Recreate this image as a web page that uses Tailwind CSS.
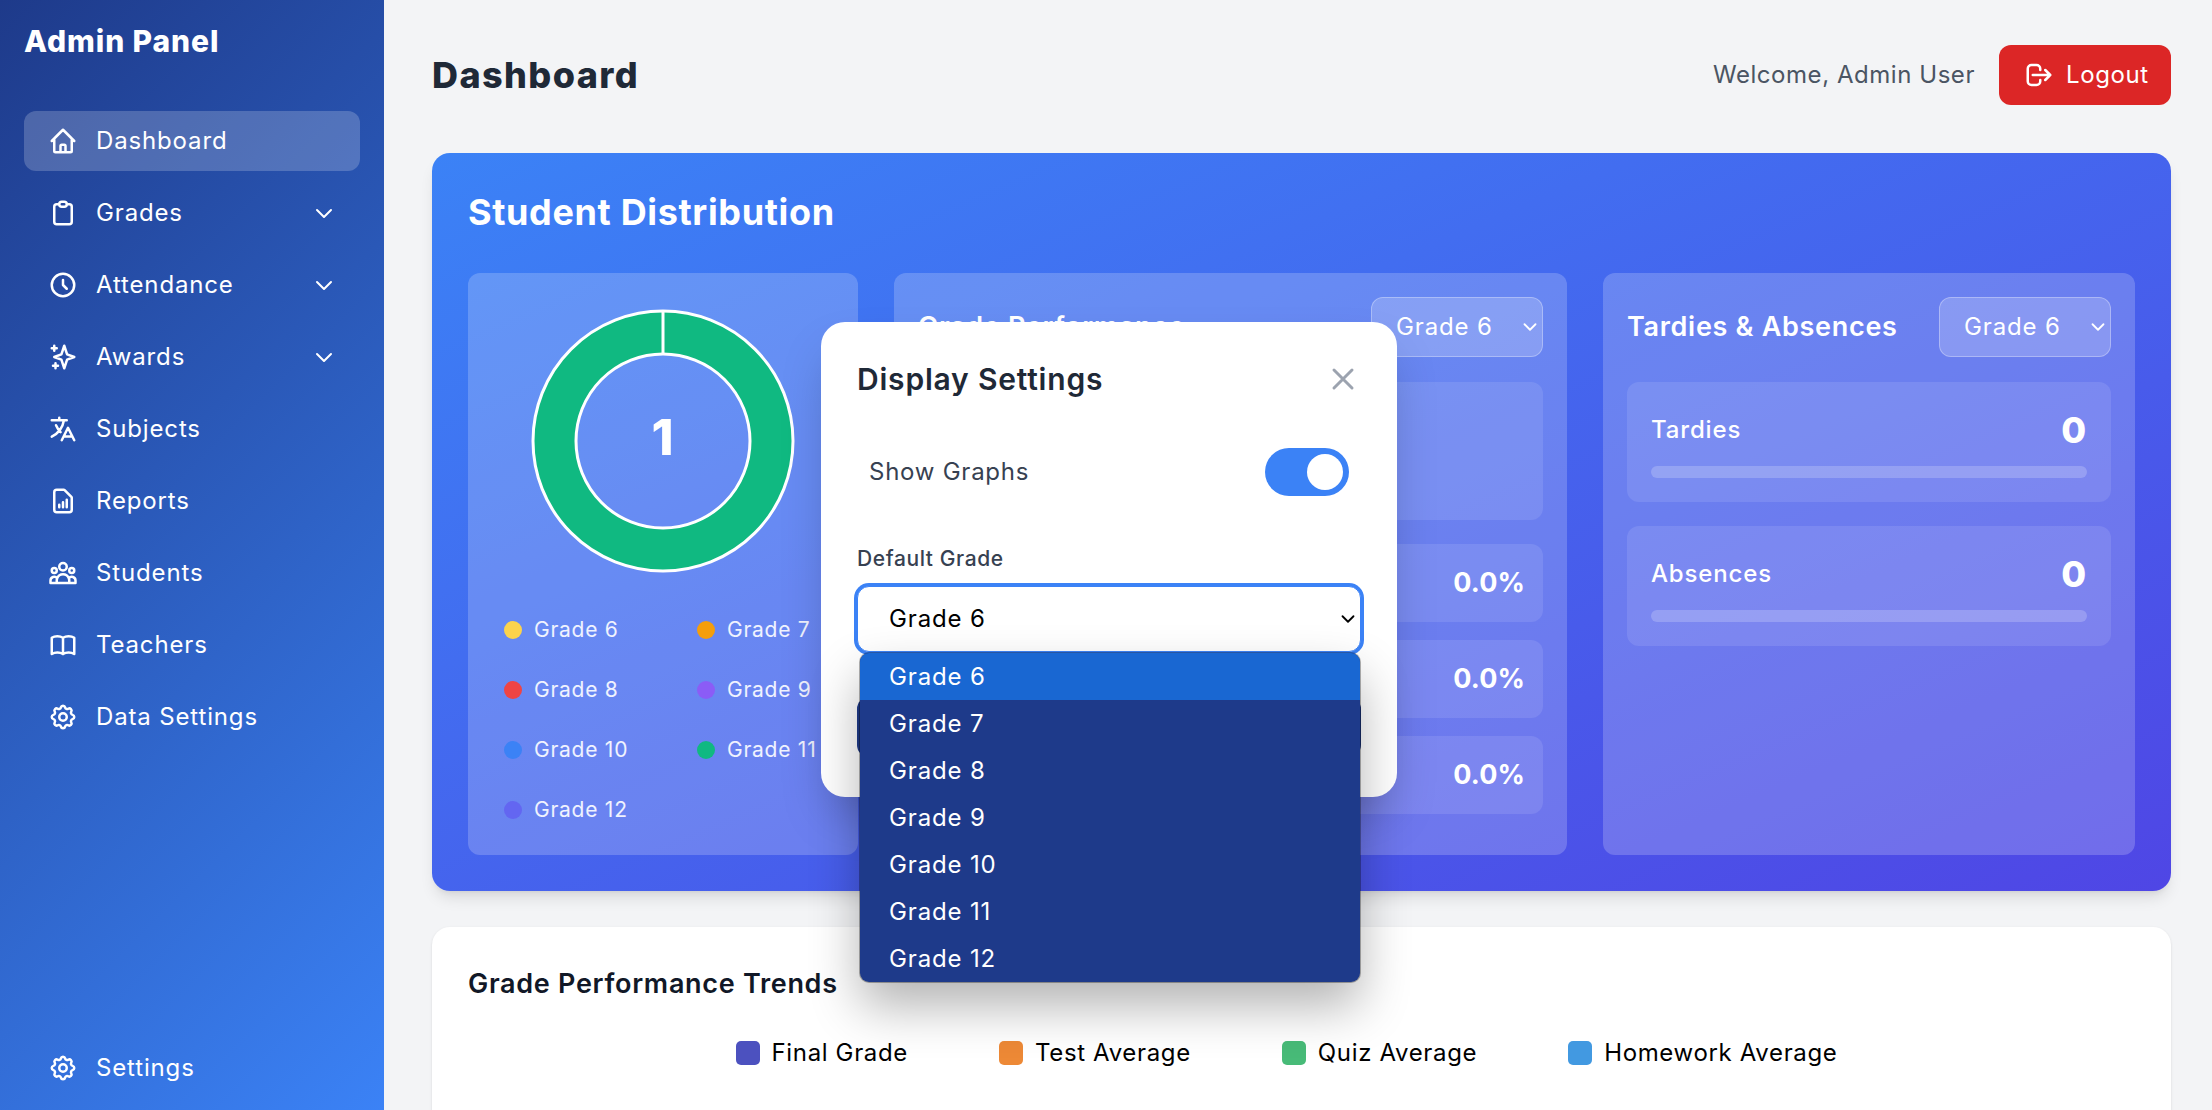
<!DOCTYPE html>
<html lang="en" class="text-[24px]">
<head>
    <meta charset="UTF-8">
    <title>Admin Panel - Dashboard</title>
    <script src="https://cdn.jsdelivr.net/npm/@tailwindcss/browser@4"></script>
</head>
<body class="font-[family-name:Inter,sans-serif] tracking-[0.85px] bg-[#f3f4f6] overflow-hidden">
<div class="relative flex h-screen overflow-hidden">
    <!-- Sidebar -->
    <aside class="w-64 shrink-0 h-full flex flex-col px-4 text-white bg-[linear-gradient(135deg,#1e3a8a,#3b82f6)]">
        <h1 class="text-xl font-extrabold tracking-[0.9px] pt-[20px] h-[111px]">Admin Panel</h1>
        <nav class="flex flex-col gap-2">
            <a href="#" class="flex items-center h-10 px-4 rounded-lg bg-white/20">
                <svg class="w-5 h-5 mr-3" fill="none" stroke="currentColor" stroke-width="2" stroke-linecap="round" stroke-linejoin="round" viewBox="0 0 24 24"><path d="M3 12l2-2m0 0l7-7 7 7M5 10v10a1 1 0 001 1h3m10-11l2 2m-2-2v10a1 1 0 01-1 1h-3m-6 0a1 1 0 001-1v-4a1 1 0 011-1h2a1 1 0 011 1v4a1 1 0 001 1m-6 0h6"/></svg>
                <span>Dashboard</span>
            </a>
            <a href="#" class="flex items-center h-10 px-4 rounded-lg">
                <svg class="w-5 h-5 mr-3" fill="none" stroke="currentColor" stroke-width="2" stroke-linecap="round" stroke-linejoin="round" viewBox="0 0 24 24"><path d="M9 5H7a2 2 0 00-2 2v12a2 2 0 002 2h10a2 2 0 002-2V7a2 2 0 00-2-2h-2M9 5a2 2 0 002 2h2a2 2 0 002-2M9 5a2 2 0 012-2h2a2 2 0 012 2"/></svg>
                <span>Grades</span>
                <svg class="w-4 h-4 ml-auto" fill="none" stroke="currentColor" stroke-width="2" stroke-linecap="round" stroke-linejoin="round" viewBox="0 0 24 24"><path d="M19 9l-7 7-7-7"/></svg>
            </a>
            <a href="#" class="flex items-center h-10 px-4 rounded-lg">
                <svg class="w-5 h-5 mr-3" fill="none" stroke="currentColor" stroke-width="2" stroke-linecap="round" stroke-linejoin="round" viewBox="0 0 24 24"><path d="M12 8v4l3 3m6-3a9 9 0 11-18 0 9 9 0 0118 0z"/></svg>
                <span>Attendance</span>
                <svg class="w-4 h-4 ml-auto" fill="none" stroke="currentColor" stroke-width="2" stroke-linecap="round" stroke-linejoin="round" viewBox="0 0 24 24"><path d="M19 9l-7 7-7-7"/></svg>
            </a>
            <a href="#" class="flex items-center h-10 px-4 rounded-lg">
                <svg class="w-5 h-5 mr-3" fill="none" stroke="currentColor" stroke-width="2" stroke-linecap="round" stroke-linejoin="round" viewBox="0 0 24 24"><path d="M5 3v4M3 5h4M6 17v4m-2-2h4m5-16l2.286 6.857L21 12l-5.714 2.143L13 21l-2.286-6.857L5 12l5.714-2.143L13 3z"/></svg>
                <span>Awards</span>
                <svg class="w-4 h-4 ml-auto" fill="none" stroke="currentColor" stroke-width="2" stroke-linecap="round" stroke-linejoin="round" viewBox="0 0 24 24"><path d="M19 9l-7 7-7-7"/></svg>
            </a>
            <a href="#" class="flex items-center h-10 px-4 rounded-lg">
                <svg class="w-5 h-5 mr-3" fill="none" stroke="currentColor" stroke-width="2" stroke-linecap="round" stroke-linejoin="round" viewBox="0 0 24 24"><path d="M3 5h12M9 3v2m1.048 9.5A18.022 18.022 0 016.412 9m6.088 9h7M11 21l5-10 5 10M12.751 5C11.783 10.77 8.07 15.61 3 18.129"/></svg>
                <span>Subjects</span>
            </a>
            <a href="#" class="flex items-center h-10 px-4 rounded-lg">
                <svg class="w-5 h-5 mr-3" fill="none" stroke="currentColor" stroke-width="2" stroke-linecap="round" stroke-linejoin="round" viewBox="0 0 24 24"><path d="M9 17v-2m3 2v-4m3 4v-6m2 10H7a2 2 0 01-2-2V5a2 2 0 012-2h5.586a1 1 0 01.707.293l5.414 5.414a1 1 0 01.293.707V19a2 2 0 01-2 2z"/></svg>
                <span>Reports</span>
            </a>
            <a href="#" class="flex items-center h-10 px-4 rounded-lg">
                <svg class="w-5 h-5 mr-3" fill="none" stroke="currentColor" stroke-width="2" stroke-linecap="round" stroke-linejoin="round" viewBox="0 0 24 24"><path d="M17 20h5v-2a3 3 0 00-5.356-1.857M17 20H7m10 0v-2c0-.656-.126-1.283-.356-1.857M7 20H2v-2a3 3 0 015.356-1.857M7 20v-2c0-.656.126-1.283.356-1.857m0 0a5.002 5.002 0 019.288 0M15 7a3 3 0 11-6 0 3 3 0 016 0zm6 3a2 2 0 11-4 0 2 2 0 014 0zM7 10a2 2 0 11-4 0 2 2 0 014 0z"/></svg>
                <span>Students</span>
            </a>
            <a href="#" class="flex items-center h-10 px-4 rounded-lg">
                <svg class="w-5 h-5 mr-3" fill="none" stroke="currentColor" stroke-width="2" stroke-linecap="round" stroke-linejoin="round" viewBox="0 0 24 24"><path d="M12 6.253v13m0-13C10.832 5.477 9.246 5 7.5 5S4.168 5.477 3 6.253v13C4.168 18.477 5.754 18 7.5 18s3.332.477 4.5 1.253m0-13C13.168 5.477 14.754 5 16.5 5c1.747 0 3.332.477 4.5 1.253v13C19.832 18.477 18.247 18 16.5 18c-1.746 0-3.332.477-4.5 1.253"/></svg>
                <span>Teachers</span>
            </a>
            <a href="#" class="flex items-center h-10 px-4 rounded-lg">
                <svg class="w-5 h-5 mr-3" fill="none" stroke="currentColor" stroke-width="2" stroke-linecap="round" stroke-linejoin="round" viewBox="0 0 24 24"><path d="M10.325 4.317c.426-1.756 2.924-1.756 3.35 0a1.724 1.724 0 002.573 1.066c1.543-.94 3.31.826 2.37 2.37a1.724 1.724 0 001.065 2.572c1.756.426 1.756 2.924 0 3.35a1.724 1.724 0 00-1.066 2.573c.94 1.543-.826 3.31-2.37 2.37a1.724 1.724 0 00-2.572 1.065c-.426 1.756-2.924 1.756-3.35 0a1.724 1.724 0 00-2.573-1.066c-1.543.94-3.31-.826-2.37-2.37a1.724 1.724 0 00-1.065-2.572c-1.756-.426-1.756-2.924 0-3.35a1.724 1.724 0 001.066-2.573c-.94-1.543.826-3.31 2.37-2.37.996.608 2.296.07 2.572-1.065z"/><path d="M15 12a3 3 0 11-6 0 3 3 0 016 0z"/></svg>
                <span>Data Settings</span>
            </a>
        </nav>
        <a href="#" class="flex items-center h-10 px-4 rounded-lg mt-auto mb-[12px]">
            <svg class="w-5 h-5 mr-3" fill="none" stroke="currentColor" stroke-width="2" stroke-linecap="round" stroke-linejoin="round" viewBox="0 0 24 24"><path d="M10.325 4.317c.426-1.756 2.924-1.756 3.35 0a1.724 1.724 0 002.573 1.066c1.543-.94 3.31.826 2.37 2.37a1.724 1.724 0 001.065 2.572c1.756.426 1.756 2.924 0 3.35a1.724 1.724 0 00-1.066 2.573c.94 1.543-.826 3.31-2.37 2.37a1.724 1.724 0 00-2.572 1.065c-.426 1.756-2.924 1.756-3.35 0a1.724 1.724 0 00-2.573-1.066c-1.543.94-3.31-.826-2.37-2.37a1.724 1.724 0 00-1.065-2.572c-1.756-.426-1.756-2.924 0-3.35a1.724 1.724 0 001.066-2.573c-.94-1.543.826-3.31 2.37-2.37.996.608 2.296.07 2.572-1.065z"/><path d="M15 12a3 3 0 11-6 0 3 3 0 016 0z"/></svg>
            <span>Settings</span>
        </a>
    </aside>

    <!-- Main Content -->
    <main class="flex-1 min-w-0 pl-8 pr-[41px] pt-[45px] overflow-hidden">
        <header class="flex items-center justify-between mb-8">
            <h2 class="text-2xl font-extrabold tracking-[1.4px] text-[#1f2937]">Dashboard</h2>
            <div class="flex items-center gap-4">
                <span class="tracking-[0.55px] text-[#4b5563]">Welcome, Admin User</span>
                <button class="flex items-center w-[172px] h-10 pl-[25px] rounded-lg bg-[#dc2626] text-white tracking-[0.6px]">
                    <svg class="w-5 h-5 mr-2" fill="none" stroke="currentColor" stroke-width="2" stroke-linecap="round" stroke-linejoin="round" viewBox="0 0 24 24"><path d="M17 16l4-4m0 0l-4-4m4 4H7m6 4v1a3 3 0 01-3 3H6a3 3 0 01-3-3V7a3 3 0 013-3h4a3 3 0 013 3v1"/></svg>
                    Logout
                </button>
            </div>
        </header>

        <!-- Student Distribution -->
        <section class="rounded-xl p-6 text-white shadow-lg bg-linear-to-br/srgb from-[#3b82f6] to-[#4f46e5]">
            <h3 class="text-2xl font-bold tracking-[0.65px] mb-6 leading-[46px]">Student Distribution</h3>
            <div class="grid grid-cols-[390px_1fr_532px] gap-6 h-[582px] mt-[38px]">
                <div class="rounded-lg bg-white/20 pt-[33px] px-6">
                    <div class="relative w-[270px] h-[270px] mx-auto">
                        <svg class="w-full h-full" viewBox="0 0 270 270">
                            <circle cx="135" cy="135" r="108.5" fill="none" stroke="#10b981" stroke-width="43"/>
                            <circle cx="135" cy="135" r="130" fill="none" stroke="#fff" stroke-width="3"/>
                            <circle cx="135" cy="135" r="87" fill="none" stroke="#fff" stroke-width="3"/>
                            <line x1="135" y1="5" x2="135" y2="48" stroke="#fff" stroke-width="3"/>
                        </svg>
                        <div class="absolute inset-0 flex items-center justify-center text-[50px] font-extrabold leading-none pb-[9px]">1</div>
                    </div>
                    <div class="grid grid-cols-[193px_1fr] gap-y-5 mt-[39px] text-sm tracking-[0.75px] text-white/90">
                        <div class="flex items-center"><span class="w-3 h-3 rounded-full mr-2 bg-[#fcd34d]"></span>Grade 6</div>
                        <div class="flex items-center"><span class="w-3 h-3 rounded-full mr-2 bg-[#f59e0b]"></span>Grade 7</div>
                        <div class="flex items-center"><span class="w-3 h-3 rounded-full mr-2 bg-[#ef4444]"></span>Grade 8</div>
                        <div class="flex items-center"><span class="w-3 h-3 rounded-full mr-2 bg-[#8b5cf6]"></span>Grade 9</div>
                        <div class="flex items-center"><span class="w-3 h-3 rounded-full mr-2 bg-[#3b82f6]"></span>Grade 10</div>
                        <div class="flex items-center"><span class="w-3 h-3 rounded-full mr-2 bg-[#10b981]"></span>Grade 11</div>
                        <div class="flex items-center"><span class="w-3 h-3 rounded-full mr-2 bg-[#6366f1]"></span>Grade 12</div>
                    </div>
                </div>

                <div class="rounded-lg bg-white/20 p-4">
                    <div class="flex items-center justify-between mb-[25px]">
                        <h4 class="text-lg font-semibold tracking-[0.7px]">Grade Performance</h4>
                        <div class="relative">
                            <select class="block appearance-none w-[172px] h-10 px-4 rounded-lg bg-white/20 border border-white/30 text-white">
                                <option>Grade 6</option>
                            </select>
                            <svg class="absolute right-[2px] top-[19px] w-[22px] h-[22px] pointer-events-none" fill="none" stroke="currentColor" stroke-width="2" stroke-linecap="round" stroke-linejoin="round" viewBox="0 0 24 24"><path d="M18 9l-6 6-6-6"/></svg>
                        </div>
                    </div>
                    <div class="h-[138px] rounded-lg bg-white/10 mb-4"></div>
                    <div class="flex flex-col gap-[18px] text-lg font-bold tracking-[0.1px]">
                        <div class="flex items-center justify-end h-[78px] px-3 rounded-lg bg-white/10">0.0%</div>
                        <div class="flex items-center justify-end h-[78px] px-3 rounded-lg bg-white/10">0.0%</div>
                        <div class="flex items-center justify-end h-[78px] px-3 rounded-lg bg-white/10">0.0%</div>
                    </div>
                </div>

                <div class="rounded-lg bg-white/20 p-4">
                    <div class="flex items-center justify-between mb-[25px]">
                        <h4 class="text-lg font-semibold tracking-[0.7px]">Tardies &amp; Absences</h4>
                        <div class="relative">
                            <select class="block appearance-none w-[172px] h-10 px-4 rounded-lg bg-white/20 border border-white/30 text-white">
                                <option>Grade 6</option>
                            </select>
                            <svg class="absolute right-[2px] top-[19px] w-[22px] h-[22px] pointer-events-none" fill="none" stroke="currentColor" stroke-width="2" stroke-linecap="round" stroke-linejoin="round" viewBox="0 0 24 24"><path d="M18 9l-6 6-6-6"/></svg>
                        </div>
                    </div>
                    <div class="flex flex-col gap-4">
                        <div class="rounded-lg bg-white/10 p-4">
                            <div class="flex items-center justify-between h-8 mb-2"><span class="font-medium">Tardies</span><span class="text-2xl font-extrabold">0</span></div>
                            <div class="h-2 rounded-full bg-white/20"></div>
                        </div>
                        <div class="rounded-lg bg-white/10 p-4">
                            <div class="flex items-center justify-between h-8 mb-2"><span class="font-medium">Absences</span><span class="text-2xl font-extrabold">0</span></div>
                            <div class="h-2 rounded-full bg-white/20"></div>
                        </div>
                    </div>
                </div>
            </div>
        </section>

        <!-- Grade Performance Trends -->
        <section class="mt-6 rounded-xl bg-white shadow-sm p-6 h-[300px]">
            <h3 class="text-lg font-semibold tracking-[0.7px] text-[#111827]">Grade Performance Trends</h3>
            <div class="flex justify-center gap-[91px] mt-[30px] pr-[30px] tracking-[0.65px] text-black">
                <div class="flex items-center"><span class="w-4 h-4 rounded-[5px] mr-2 bg-[#4c51bf]"></span>Final Grade</div>
                <div class="flex items-center"><span class="w-4 h-4 rounded-[5px] mr-2 bg-[#ed8936]"></span>Test Average</div>
                <div class="flex items-center"><span class="w-4 h-4 rounded-[5px] mr-2 bg-[#48bb78]"></span>Quiz Average</div>
                <div class="flex items-center"><span class="w-4 h-4 rounded-[5px] mr-2 bg-[#4299e1]"></span>Homework Average</div>
            </div>
        </section>
    </main>

    <!-- Display Settings Modal -->
    <div class="absolute left-[821px] top-[322px] w-[576px] h-[475px] p-6 rounded-2xl bg-white shadow-2xl">
        <div class="flex items-center justify-between mb-6">
            <h3 class="text-xl font-semibold tracking-[0.8px] text-[#1f2937]">Display Settings</h3>
            <svg class="w-6 h-6 text-[#9ca3af]" fill="none" stroke="currentColor" stroke-width="2" stroke-linecap="round" stroke-linejoin="round" viewBox="0 0 24 24"><path d="M6 18L18 6M6 6l12 12"/></svg>
        </div>
        <div class="flex items-center justify-between p-2">
            <span class="tracking-[0.75px] text-[#374151]">Show Graphs</span>
            <span class="flex items-center justify-end w-14 h-8 px-1 rounded-full bg-[#3b82f6]">
                <span class="w-6 h-6 rounded-full bg-white"></span>
            </span>
        </div>
        <label class="block mt-6 mb-2 text-sm font-medium tracking-[0.6px] text-[#374151]">Default Grade</label>
        <div class="relative">
            <select class="block appearance-none w-full h-[66px] pl-[31px] rounded-lg bg-white text-black border border-[#3b82f6] ring-[3px] ring-[#3b82f6]">
                <option>Grade 6</option>
            </select>
            <svg class="absolute right-[2px] top-[22px] w-[22px] h-[22px] text-black pointer-events-none" fill="none" stroke="currentColor" stroke-width="2" stroke-linecap="round" stroke-linejoin="round" viewBox="0 0 24 24"><path d="M18 9l-6 6-6-6"/></svg>
        </div>
        <button class="block w-full h-10 mt-[45px] rounded-lg bg-[#1e3a8a]"></button>
        <!-- open select list -->
        <ul class="absolute left-[39px] top-[331px] w-[500px] rounded-[9px] overflow-hidden bg-[#1e3a8a] text-white shadow-[0_0_0_1px_rgba(0,0,0,0.3),0_24px_50px_rgba(0,0,0,0.3)]">
            <li class="flex items-center h-[47px] px-[29px] bg-[#1967d2]">Grade 6</li>
            <li class="flex items-center h-[47px] px-[29px]">Grade 7</li>
            <li class="flex items-center h-[47px] px-[29px]">Grade 8</li>
            <li class="flex items-center h-[47px] px-[29px]">Grade 9</li>
            <li class="flex items-center h-[47px] px-[29px]">Grade 10</li>
            <li class="flex items-center h-[47px] px-[29px]">Grade 11</li>
            <li class="flex items-center h-[47px] px-[29px]">Grade 12</li>
        </ul>
    </div>
</div>
</body>
</html>
